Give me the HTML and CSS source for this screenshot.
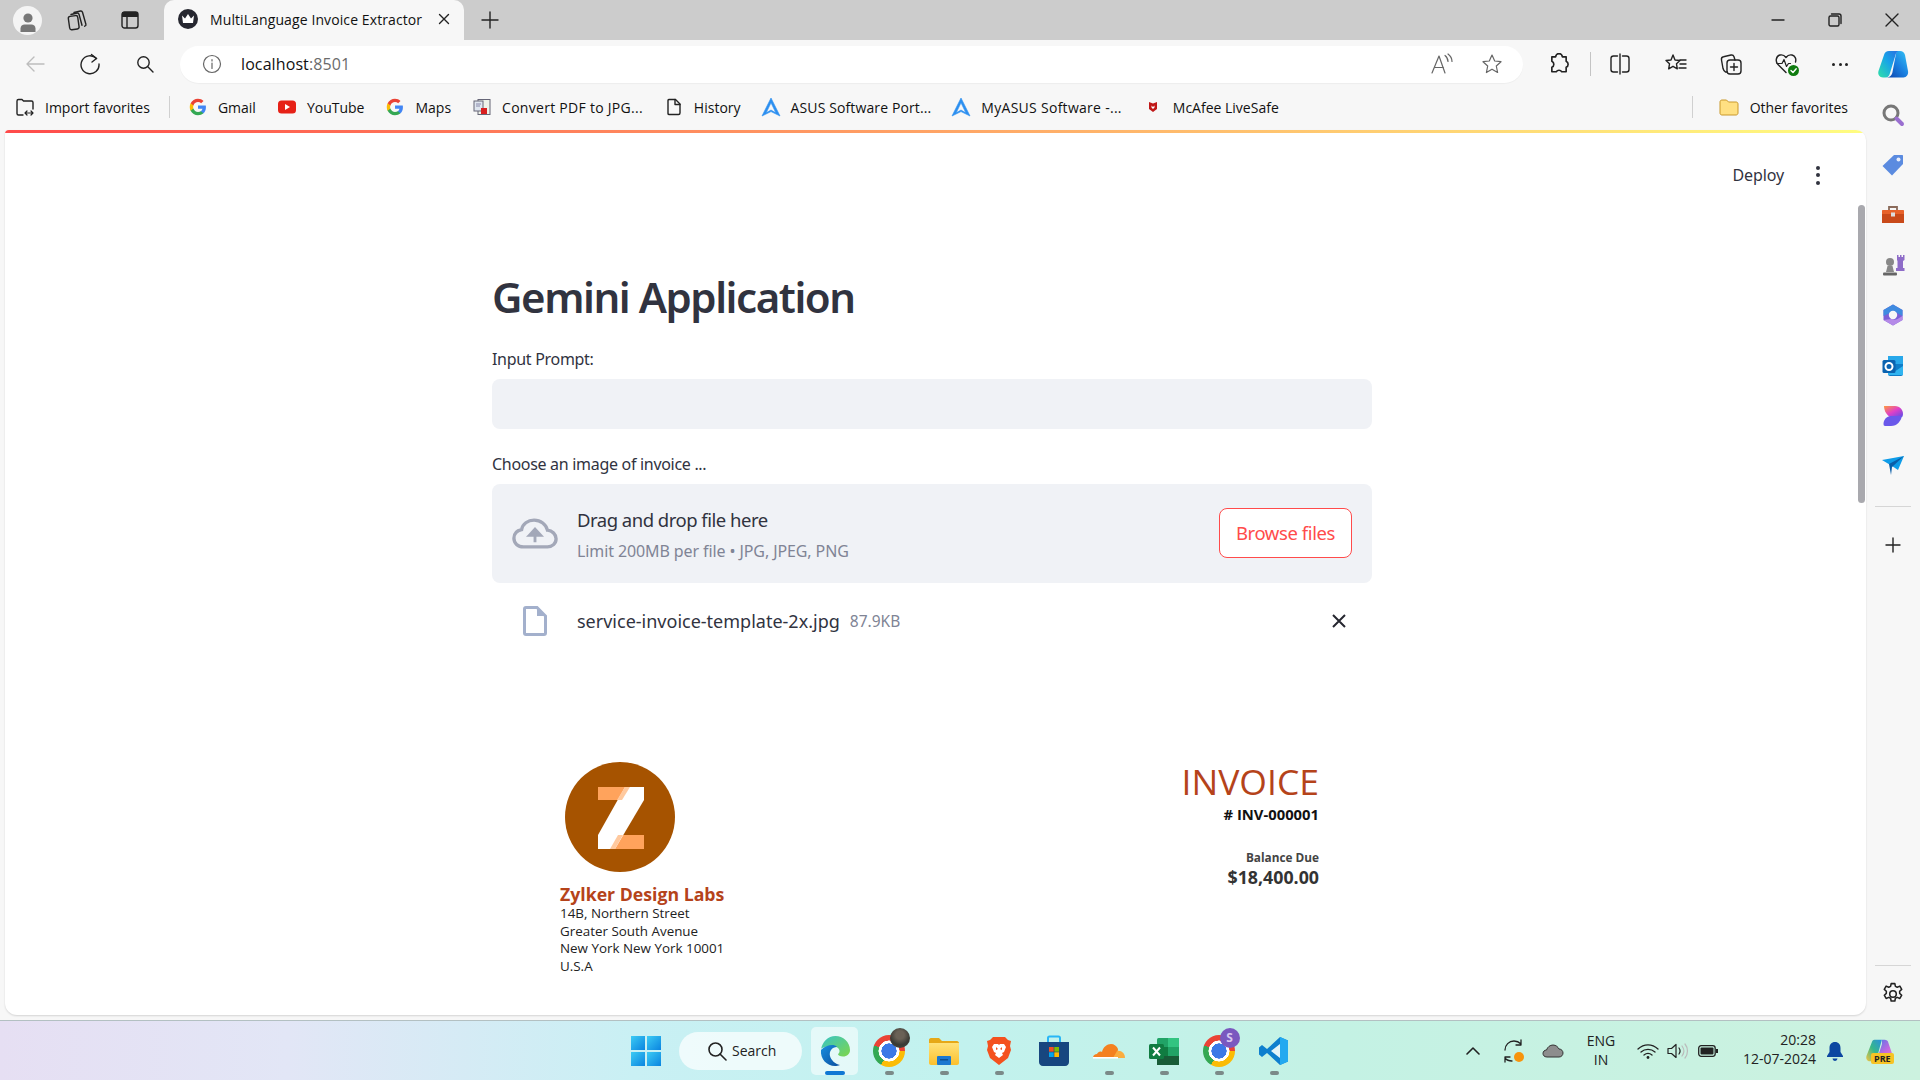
FILE: index.html
```html
<!DOCTYPE html>
<html lang="en">
<head>
<meta charset="utf-8">
<title>MultiLanguage Invoice Extractor</title>
<link rel="stylesheet" href="styles.css">
</head>
<body>
<svg class="defs" width="0" height="0" aria-hidden="true">
  <defs>
    <linearGradient id="cpA" x1="0" y1="1" x2="1" y2="0"><stop offset="0" stop-color="#2fe0a8"/><stop offset=".55" stop-color="#18a4e8"/><stop offset="1" stop-color="#2a6fe0"/></linearGradient>
    <linearGradient id="cpB" x1="0" y1="1" x2="1" y2="0"><stop offset="0" stop-color="#0a3fa8"/><stop offset=".5" stop-color="#1a7fe0"/><stop offset="1" stop-color="#35c6f6"/></linearGradient>
    <linearGradient id="cpC" x1="0" y1="1" x2="1" y2="0"><stop offset="0" stop-color="#f5c542"/><stop offset=".5" stop-color="#36b88a"/><stop offset="1" stop-color="#2b8fe0"/></linearGradient>
    <linearGradient id="cpD" x1="0" y1="0" x2="1" y2="1"><stop offset="0" stop-color="#3c7be8"/><stop offset=".6" stop-color="#c668e0"/><stop offset="1" stop-color="#f08aa8"/></linearGradient>
    <linearGradient id="edgeA" x1="0" y1="0" x2="1" y2="1"><stop offset="0" stop-color="#36c4c8"/><stop offset="1" stop-color="#7fd64a"/></linearGradient>
    <linearGradient id="edgeB" x1="0" y1="0" x2="1" y2="1"><stop offset="0" stop-color="#1a8fe0"/><stop offset="1" stop-color="#0b4f9e"/></linearGradient>
    <linearGradient id="dropG" x1="0" y1="0" x2="1" y2="1"><stop offset="0" stop-color="#ff9a3c"/><stop offset=".5" stop-color="#e040c8"/><stop offset="1" stop-color="#5a4de8"/></linearGradient>
    <linearGradient id="folderG" x1="0" y1="0" x2="0" y2="1"><stop offset="0" stop-color="#ffe27a"/><stop offset="1" stop-color="#fbc02d"/></linearGradient>
    <symbol id="gicon" viewBox="0 0 48 48">
      <path fill="#4285F4" d="M45.12 24.5c0-1.56-.14-3.06-.4-4.5H24v8.51h11.84c-.51 2.75-2.06 5.08-4.39 6.64v5.52h7.11c4.16-3.83 6.56-9.47 6.56-15.67z"/>
      <path fill="#34A853" d="M24 46c5.94 0 10.92-1.97 14.56-5.33l-7.11-5.52c-1.97 1.32-4.49 2.1-7.45 2.1-5.73 0-10.58-3.87-12.31-9.07H4.34v5.7C7.96 41.07 15.4 46 24 46z"/>
      <path fill="#FBBC05" d="M11.69 28.18C11.25 26.86 11 25.45 11 24s.25-2.86.69-4.18v-5.7H4.34C2.85 17.09 2 20.45 2 24c0 3.55.85 6.91 2.34 9.88l7.35-5.7z"/>
      <path fill="#EA4335" d="M24 10.75c3.23 0 6.13 1.11 8.41 3.29l6.31-6.31C34.91 4.18 29.93 2 24 2 15.4 2 7.96 6.93 4.34 14.12l7.35 5.7c1.73-5.2 6.58-9.07 12.31-9.07z"/>
    </symbol>
    <symbol id="asus" viewBox="0 0 20 20">
      <path d="M10 1 L19 19 L10 14.600 L1 19 Z M10 5.800 L5.200 15.800 L10 13 L14.800 15.800 Z" fill="#2b8ff0" fill-rule="evenodd" stroke="#2b8ff0" stroke-width=".6" stroke-linejoin="round"/>
    </symbol>
  </defs>
</svg>

<header class="titlebar">
  <div class="slot s55"><span class="avatar"><svg width="20" height="22" viewBox="0 0 20 22"><circle cx="10" cy="7" r="4.600" fill="#777"/><path d="M2.500 21v-3.500c0-2.600 2-4 4-4h7c2 0 4 1.400 4 4V21z" fill="#777"/></svg></span></div>
  <div class="slot s44"><svg width="22" height="22" viewBox="0 0 22 22" class="ln"><path d="M8 3.500 14.500 2c1-.2 1.700.3 2 1.200l3.400 12c.3 1-.2 1.700-1.200 2"/><path d="M5 5.500 11 4c1-.2 1.700.3 2 1.200l3 11"/><rect x="3" y="7" width="9.500" height="13.500" rx="2" transform="rotate(-8 7 14)"/></svg></div>
  <div class="slot s62"><svg width="18" height="18" viewBox="0 0 18 18"><rect x="1" y="1" width="16" height="16" rx="2.500" fill="none" stroke="#222" stroke-width="1.400"/><rect x="1" y="1" width="16" height="5" fill="#222"/><path d="M6 6v11" stroke="#222" stroke-width="1.400"/></svg></div>
  <div class="tab">
    <span class="favicon"><svg width="14" height="12" viewBox="0 0 14 12"><path d="M1 2.500 4 5.500 7 1l3 4.500 3-3-1 7.500H2z" fill="#fff"/></svg></span>
    <span class="tab-title">MultiLanguage Invoice Extractor</span>
    <svg class="tab-x ln" width="12" height="12" viewBox="0 0 12 12"><path d="M1.500 1.500l9 9M10.500 1.500l-9 9"/></svg>
  </div>
  <div class="slot s52"><svg width="18" height="18" viewBox="0 0 18 18" class="ln"><path d="M9 1v16M1 9h16"/></svg></div>
  <div class="win">
    <div class="slot s57"><svg width="14" height="14" viewBox="0 0 14 14" class="ln"><path d="M1 7h12"/></svg></div>
    <div class="slot s57"><svg width="14" height="14" viewBox="0 0 14 14" class="ln"><rect x="1" y="3" width="10" height="10" rx="1.500"/><path d="M3.500 1H11c1.200 0 2 .8 2 2v7.500"/></svg></div>
    <div class="slot s57"><svg width="14" height="14" viewBox="0 0 14 14" class="ln"><path d="M1 1l12 12M13 1 1 13"/></svg></div>
  </div>
</header>

<nav class="toolbar">
  <div class="slot s70"><svg width="20" height="18" viewBox="0 0 20 18" class="ln pale"><path d="M19 9H2M9 2 2 9l7 7"/></svg></div>
  <div class="slot s40"><svg width="22" height="22" viewBox="0 0 22 22" class="ln"><path d="M17.500 5.500A9 9 0 1 0 20 11"/><path d="M12.500 1.500l5 4-4.500 3.500"/></svg></div>
  <div class="slot s70"><svg width="18" height="18" viewBox="0 0 18 18" class="ln"><circle cx="7.500" cy="7.500" r="5.700"/><path d="M11.800 11.800 17 17"/></svg></div>
  <div class="address">
    <svg width="20" height="20" viewBox="0 0 20 20" class="ln grey"><circle cx="10" cy="10" r="8.500"/><path d="M10 9v5.500M10 5.500v1.500"/></svg>
    <span class="url">localhost<span class="port">:8501</span></span>
    <div class="addr-right">
      <svg width="24" height="22" viewBox="0 0 24 22" class="ln grey"><path d="M2 20 9 3l6 17M4.500 14.500h9"/><path d="M15 2.500c2 1.600 3 3.600 3 6M18 1c2.600 2 4 4.600 4 7.500"/></svg>
      <svg width="22" height="22" viewBox="0 0 22 22" class="ln grey"><path d="M11 2l2.700 6 6.300.7-4.700 4.300 1.300 6.500-5.600-3.300-5.600 3.300 1.300-6.500L2 8.700 8.300 8z"/></svg>
    </div>
  </div>
  <div class="slot s48 ext"><svg width="22" height="22" viewBox="0 0 20 20" class="ln"><path d="M7 3.500a3 3 0 0 1 6 0h3.500v4a3 3 0 0 1 0 5.500v4h-4a3 3 0 0 0-5 0h-4v-4a3 3 0 0 0 0-5.500v-4z" stroke-width="1.500"/></svg></div>
  <span class="vsep"></span>
  <div class="slot s58"><svg width="22" height="22" viewBox="0 0 22 22" class="ln"><path d="M8.500 3H4.500C3 3 2 4 2 5.500v11C2 18 3 19 4.500 19h4M13.500 3h4C19 3 20 4 20 5.500v11c0 1.500-1 2.500-2.500 2.500h-4M11 1v20"/></svg></div>
  <div class="slot s53"><svg width="22" height="22" viewBox="0 0 22 22" class="ln"><path d="M8 2l2 5 5 .5-3.500 3.300.8 5-4.300-2.500-4.300 2.500.8-5L1 7.500 6 7z"/><path d="M15 7h6M15 11h6M14 15h7"/></svg></div>
  <div class="slot s58"><svg width="24" height="24" viewBox="0 0 24 24" class="ln"><rect x="8" y="8" width="14" height="14" rx="3"/><path d="M15 11.500v7M11.500 15h7"/><path d="M8 20H6.500C5 19.500 4.500 18 4 16.500L2.500 8c-.3-1.700.5-3 2-3.300L12 3c1.500-.3 2.500.3 3 1.700l1 3.300"/></svg></div>
  <div class="slot s54 heart"><svg width="26" height="26" viewBox="0 0 26 26" class="ln"><path d="M12 21.500 4 13.500C1 10.500 2 5 6 4c2.500-.6 4.500.5 6 2.500C13.500 4.500 15.500 3.400 18 4c3 .8 4.500 4 3.500 7"/><path d="M3 12.500h5l2-4 2.500 7 2-3h2" stroke-width="1.200"/><circle cx="19.500" cy="19.500" r="5.500" fill="#107c10" stroke="none"/><path d="M17 19.500l2 2 3.200-3.700" stroke="#fff"/></svg></div>
  <div class="slot s52"><span class="dots3"><i></i><i></i><i></i></span></div>
  <div class="slot s54"><svg width="32" height="30" viewBox="0 0 32 30"><path d="M19.500 2H23c2.500 0 4.300 1.500 5 4l3 16c.7 3.500-1.500 6.500-4.500 6.500H9c3 0 5.500-1.500 6.300-4.500z" fill="url(#cpB)"/><path d="M12 2h9c-1 .5-2 2-2.500 4L13 24c-.5 2.500-2 4.500-4.500 4.500H6c-3.500 0-5.500-3-4.500-6.500L7 6c.7-2.500 2.500-4 5-4z" fill="url(#cpA)"/></svg></div>
</nav>

<div class="workspace">
  <div class="leftcol">
    <div class="bookmarks">
      <a class="bm first"><svg width="20" height="20" viewBox="0 0 20 20" class="ln"><path d="M8 18H3.500C2.500 18 2 17.400 2 16.500V4C2 3 2.500 2.500 3.500 2.500H7l1.500 1.500h8c1 0 1.500.5 1.500 1.500V12"/><path d="M10 16h8M12 14l-2 2 2 2M16 14l2 2-2 2" stroke-width="1.200"/></svg><span>Import favorites</span></a>
      <span class="bsep"></span>
      <a class="bm"><svg width="18" height="18"><use href="#gicon"/></svg><span>Gmail</span></a>
      <a class="bm"><svg width="18" height="18" viewBox="0 0 18 18"><rect x="0" y="2.500" width="18" height="13" rx="3.500" fill="#e62117"/><path d="M7 6l5 3-5 3z" fill="#fff"/></svg><span>YouTube</span></a>
      <a class="bm"><svg width="18" height="18"><use href="#gicon"/></svg><span>Maps</span></a>
      <a class="bm wide"><svg width="18" height="18" viewBox="0 0 18 18"><rect x="5" y="1.500" width="12" height="15" fill="#eef2e8" stroke="#667" /><rect x="1" y="3" width="9" height="10" fill="#dfe6ef" stroke="#667"/><rect x="8" y="10" width="6" height="6" fill="#d81e1e"/><path d="M3 6h5M3 8h4" stroke="#88a" /></svg><span>Convert PDF to JPG...</span></a>
      <a class="bm"><svg width="18" height="18" viewBox="0 0 18 18" class="ln"><path d="M4 1.500h6.500L15 6v9c0 .9-.6 1.500-1.500 1.500h-9.500C3 16.500 3 15.900 3 15V3c0-.9.1-1.500 1-1.500z"/><path d="M10 1.500V6.500h5"/></svg><span>History</span></a>
      <a class="bm asus"><svg width="20" height="20"><use href="#asus"/></svg><span>ASUS Software Port...</span></a>
      <a class="bm asus wide"><svg width="20" height="20"><use href="#asus"/></svg><span>MyASUS Software -...</span></a>
      <a class="bm"><svg width="18" height="18" viewBox="0 0 18 18"><path d="M5 4l4 1.500L13 4v7l-4 3-4-3z" fill="#c01818"/><path d="M7.500 7.500 9 9l1.500-1.500v2L9 11l-1.500-1.500z" fill="#fff"/></svg><span>McAfee LiveSafe</span></a>
      <span class="bsep end"></span>
      <a class="bm"><svg width="20" height="18" viewBox="0 0 20 18"><path d="M1 4c0-1 .6-2 2-2h4.500L9.500 4H17c1.200 0 2 .8 2 2v9c0 1-.8 2-2 2H3c-1.200 0-2-.8-2-2z" fill="#ffe082" stroke="#c9982a"/></svg><span>Other favorites</span></a>
    </div>
    <main class="page">
      <div class="decoration"></div>
      <div class="scroll-thumb"></div>
      <div class="app-header">
        <span class="deploy">Deploy</span>
        <span class="kebab"><i></i><i></i><i></i></span>
      </div>
      <section class="block">
        <h1 class="app-title">Gemini Application</h1>
        <label class="field-label first-label">Input Prompt:</label>
        <div class="text-input"></div>
        <label class="field-label second-label">Choose an image of invoice ...</label>
        <div class="dropzone">
          <svg class="cloud" width="46" height="31" viewBox="0 0 48 32"><path d="M12 30C6 30 2 26 2 21c0-4.500 3-8 8-9C11 6 16.500 2 23 2c7 0 12.500 4.500 14 10.500 5 .5 9 4.500 9 9 0 5-4 8.500-9 8.500z" fill="none" stroke="#a3a8b8" stroke-width="3.500"/><path d="M24 25V14M18 18l6-6.500 6 6.500z" fill="#a3a8b8" stroke="#a3a8b8" stroke-width="3"/></svg>
          <div class="drop-text">
            <div class="drop-title">Drag and drop file here</div>
            <div class="drop-limit">Limit 200MB per file • JPG, JPEG, PNG</div>
          </div>
          <span class="browse">Browse files</span>
        </div>
        <div class="file-row">
          <svg class="file-ic" width="24" height="30" viewBox="0 0 24 30"><path d="M3 1.500h11l8.500 8.500v17c0 1-.5 1.500-1.500 1.500H3c-1 0-1.500-.5-1.500-1.500V3c0-1 .5-1.500 1.500-1.500z" fill="#fff" stroke="#a3b0cc" stroke-width="3"/><path d="M14 1.500V10h8.500z" fill="#a3b0cc"/></svg>
          <span class="file-name">service-invoice-template-2x.jpg</span>
          <span class="file-size">87.9KB</span>
          <svg class="file-x" width="14" height="14" viewBox="0 0 14 14"><path d="M1 1l12 12M13 1 1 13" stroke="#262730" stroke-width="2" fill="none"/></svg>
        </div>
        <figure class="invoice">
          <div class="inv-left">
            <svg class="inv-logo" width="110" height="110" viewBox="0 0 110 110"><circle cx="55" cy="55" r="55" fill="#a65300"/><rect x="33" y="25" width="46" height="13" fill="#ffa35c"/><rect x="33" y="73" width="46" height="14" fill="#ffa35c"/><path d="M60 25h19v13L50 87H33V73z" fill="#fff"/><path d="M60 25h5l-8 13h-5z" fill="#ffc99e"/><path d="M50 87h-5l8-14h5z" fill="#ffc99e"/></svg>
            <div class="inv-co">Zylker Design Labs</div>
            <div class="inv-addr">14B, Northern Street</div>
            <div class="inv-addr">Greater South Avenue</div>
            <div class="inv-addr">New York New York 10001</div>
            <div class="inv-addr">U.S.A</div>
          </div>
          <div class="inv-right">
            <div class="inv-word">INVOICE</div>
            <div class="inv-no"># INV-000001</div>
            <div class="inv-bal">Balance Due</div>
            <div class="inv-amt">$18,400.00</div>
          </div>
        </figure>
      </section>
    </main>
  </div>
  <aside class="sidebar">
    <div class="side-slot"><svg width="24" height="24" viewBox="0 0 24 24"><circle cx="10" cy="10" r="7" fill="none" stroke="#777" stroke-width="3"/><path d="M15.500 15.500 21 21" stroke="#9a6fd0" stroke-width="4" stroke-linecap="round"/></svg></div>
    <div class="side-slot"><svg width="24" height="24" viewBox="0 0 24 24"><path d="M13 2h8c.6 0 1 .4 1 1v8L11 22.500 1.500 13z" fill="#5b8be0"/><circle cx="17.500" cy="6.500" r="2" fill="#e8eefc"/></svg></div>
    <div class="side-slot"><svg width="24" height="24" viewBox="0 0 24 24"><path d="M8 7V4h8v3" fill="none" stroke="#8a6a5a" stroke-width="1.800"/><path d="M1 8c0-.6.400-1 1-1h20c.6 0 1 .4 1 1v3H1z" fill="#e8622a"/><rect x="1" y="11" width="22" height="9" fill="#c94a1a"/><rect x="10" y="9.500" width="4" height="4" fill="#ddd"/></svg></div>
    <div class="side-slot"><svg width="24" height="24" viewBox="0 0 24 24"><circle cx="9" cy="9" r="4" fill="#888"/><path d="M6.500 13h5l1.500 6H5z" fill="#888"/><rect x="2" y="19.500" width="14" height="3" rx="1" fill="#666"/><path d="M16 2h1.500v2H19V2h1.500v2H22V2h1.500v5L22 8v7h1.500v3H15v-3h1.500V8L16 7z" fill="#8e6cc8"/></svg></div>
    <div class="side-slot"><svg width="24" height="24" viewBox="0 0 24 24"><path d="M12 1.500 21.500 7v10L12 22.500 2.500 17V7z" fill="#7c5fd6"/><path d="M12 1.500 21.500 7v6L16 10c-2-1.500-5-1.500-7 0L2.500 13V7z" fill="#3f8be0"/><path d="M12 22.500 21.500 17v-4l-5 3c-2 1-4 1-6 0l-8 1z" fill="#b58ae8"/><circle cx="12" cy="12" r="4.200" fill="#f7f7f7"/></svg></div>
    <div class="side-slot"><svg width="24" height="24" viewBox="0 0 24 24"><rect x="7" y="2" width="15" height="10" fill="#28a8ea"/><path d="M7 10h15v10c0 1-.6 2-2 2H9c-1.200 0-2-.9-2-2z" fill="#0f7dc8"/><path d="M7 12l7.500 5L22 12v9H7z" fill="#30b4f0"/><rect x="1.500" y="6" width="13" height="13" rx="1.500" fill="#0a63b0"/><circle cx="8" cy="12.500" r="3.500" fill="none" stroke="#fff" stroke-width="2"/></svg></div>
    <div class="side-slot"><svg width="24" height="24" viewBox="0 0 24 24"><path d="M3 2h11c5 0 8 4 8 8 0 1-.3 2-.8 3H9C6 11 3 7 3 2z" fill="url(#dropG)"/><path d="M10 12h11c-1 5-5 10-11 10H4c-1 0-1.500-1-1.500-2 0-4 3-8 7.500-8z" fill="#6a58ea"/></svg></div>
    <div class="side-slot"><svg width="24" height="22" viewBox="0 0 24 22"><path d="M1 5 23 1 17 15 11 11z" fill="#0e9ce8"/><path d="M8 9 23 1 11 12l-1 8z" fill="#0a5ea8"/></svg></div>
    <span class="side-div"></span>
    <div class="side-slot plus"><svg width="16" height="16" viewBox="0 0 16 16" class="ln"><path d="M8 1v14M1 8h14"/></svg></div>
    <span class="side-div bottom"></span>
    <div class="side-slot gear"><svg width="24" height="24" viewBox="0 0 22 22" class="ln"><circle cx="11" cy="11" r="3"/><path d="M9.300 1.500h3.400l.5 2.500 1.700.8 2.400-1 1.700 3-1.900 1.700v1.900l1.900 1.700-1.700 3-2.400-1-1.700.8-.5 2.500H9.300l-.5-2.500-1.700-.8-2.400 1-1.700-3 1.900-1.700V8.500L3 6.800l1.700-3 2.400 1 1.700-.8z"/></svg></div>
  </aside>
</div>

<footer class="taskbar">
  <div class="tk-win"><span class="winlogo"><i></i><i></i><i></i><i></i></span></div>
  <div class="tk-search"><svg width="20" height="20" viewBox="0 0 20 20" class="ln"><circle cx="8.500" cy="8.500" r="6.500" stroke-width="1.600"/><path d="M13 13l6 6" stroke-width="1.600"/></svg><span>Search</span></div>
  <div class="tk-edge">
    <svg width="32" height="32" viewBox="0 0 32 32"><path d="M2 15C3 7 9 1 16.500 1 24 1 31 7 31 15c0 4-3 6.500-7 6.500-3 0-5-1-5-2.500 2-1 2-4.500 0-6-4-3-11-2.500-17 .5z" fill="url(#edgeA)"/><path d="M2 15c5-5 13-6.500 16-3-5 0-8 4-7 9 1 4 5 8 10 9-2 .8-3.500 1-5 1C8 31 1 24 2 15z" fill="url(#edgeB)"/></svg>
    <i class="edge-bar"></i>
  </div>
  <div class="tk-apps">
    <div class="tk-app run"><span class="chrome"></span><span class="badge photo"></span></div>
    <div class="tk-app run"><svg width="30" height="28" viewBox="0 0 30 28"><path d="M0 3c0-1 .7-2 2-2h8l3 3h15c1 0 2 1 2 2v3H0z" fill="#e6a817"/><path d="M0 6h30v20c0 1-1 2-2 2H2c-1 0-2-1-2-2z" fill="url(#folderG)"/><rect x="8" y="19" width="14" height="9" rx="1" fill="#1a78d0"/><rect x="11" y="22" width="8" height="1.500" fill="#0c4f90"/></svg></div>
    <div class="tk-app run"><svg width="26" height="30" viewBox="0 0 26 30"><path d="M7 1h12l3 3 3 1-1 5 1 4-3 8-9 7-9-7-3-8 1-4-1-5 3-1z" fill="#f4511e"/><path d="M8 8h4l1 1 1-1h4l2 3-2 5-2 1 1 2-4 3-4-3 1-2-2-1-2-5z" fill="#fff"/><path d="M10 11l2 2-2 1zM16 11l-2 2 2 1z" fill="#f4511e"/></svg></div>
    <div class="tk-app"><svg width="30" height="32" viewBox="0 0 30 32"><path d="M9 7V3c0-1 .5-1.500 1.500-1.500h9C20.500 1.500 21 2 21 3v4" fill="none" stroke="#29b6f6" stroke-width="2"/><path d="M0 7h30v20c0 2-1.500 4-4 4H4c-2.500 0-4-2-4-4z" fill="#17467f"/><rect x="10" y="12" width="4.700" height="4.700" fill="#f25022"/><rect x="15.300" y="12" width="4.700" height="4.700" fill="#7fba00"/><rect x="10" y="17.300" width="4.700" height="4.700" fill="#00a4ef"/><rect x="15.300" y="17.300" width="4.700" height="4.700" fill="#ffb900"/></svg></div>
    <div class="tk-app run"><svg width="32" height="18" viewBox="0 0 32 18"><path d="M0 16c0-3 2-4 4-4 1-2 3-3 5-2 1-5 5-8 9-8 3 0 6 2 7 5l-1 9z" fill="#f48120"/><path d="M24 9c4-1 8 2 8 7H20z" fill="#faad3f"/><rect x="0" y="15" width="25" height="1.600" fill="#fff"/></svg></div>
    <div class="tk-app run"><svg width="30" height="28" viewBox="0 0 30 28"><rect x="8" y="1" width="22" height="27" rx="1.500" fill="#21a366"/><rect x="19" y="1" width="11" height="9" fill="#33c481"/><rect x="8" y="10" width="11" height="9" fill="#107c41"/><rect x="19" y="19" width="11" height="9" fill="#185c37"/><rect x="8" y="19" width="11" height="9" fill="#185c37"/><rect x="0" y="7" width="15" height="15" rx="1.500" fill="#107c41"/><path d="M4 10.500l7 8M11 10.500l-7 8" stroke="#fff" stroke-width="2"/></svg></div>
    <div class="tk-app run"><span class="chrome"></span><span class="badge letter">S</span></div>
    <div class="tk-app run"><svg width="30" height="30" viewBox="0 0 30 30"><path d="M21 1l8 3.500v21L21 29 8 17l-5 4-3-2.500V11.500L3 9l5 4z" fill="#0e7fce"/><path d="M21 1l8 3.500v21L21 29z" fill="#23a9f0"/><path d="M21 8v14l-9-7z" fill="#f0fbfa" opacity=".95"/></svg></div>
  </div>
  <div class="tray">
    <div class="tr s40"><svg width="14" height="9" viewBox="0 0 14 9" class="ln"><path d="M1 8l6-6 6 6" stroke-width="1.600"/></svg></div>
    <div class="tr s40 relative"><svg width="22" height="24" viewBox="0 0 22 24" class="ln"><path d="M3 11C3 6 7 2 12 2c3 0 5 1 7 3M19 1v5h-5M3 19c2 2.500 4 3 7 3M3 23v-5h5" stroke-width="1.300"/></svg><i class="orange-dot"></i></div>
    <div class="tr s40"><svg width="22" height="14" viewBox="0 0 22 14"><path d="M5 13C2 13 1 11 1 9.500 1 7.500 2.500 6 4.500 6 5.500 3 8 1 11 1c3 0 5 2 6 4 2.500 0 4 2 4 4s-1.500 4-4 4z" fill="#8d8d8d" stroke="#333" stroke-width="1"/></svg></div>
    <div class="tr lang"><span>ENG</span><span>IN</span></div>
    <div class="tr s30 wifi"><svg width="22" height="16" viewBox="0 0 22 16" class="ln"><path d="M1 6c6-5.500 14-5.500 20 0M4 9c4-3.500 10-3.500 14 0M7 12c2.500-2 5.500-2 8 0" stroke-width="1.300"/><circle cx="11" cy="14.500" r="1.400" fill="#222" stroke="none"/></svg></div>
    <div class="tr s30"><svg width="22" height="16" viewBox="0 0 22 16" class="ln"><path d="M1 5.500h3.500L9 1.500v13L4.500 10.500H1z" stroke-width="1.200"/><path d="M12 5c1.300 1.800 1.300 4.200 0 6" stroke-width="1.200"/><path d="M15 3c2.300 3 2.300 7 0 10M18 1c3.300 4 3.300 10 0 14" stroke="#bbb" stroke-width="1.200"/></svg></div>
    <div class="tr s30"><svg width="20" height="12" viewBox="0 0 20 12"><rect x=".7" y=".7" width="16.500" height="10.600" rx="2.500" fill="none" stroke="#222" stroke-width="1.300"/><rect x="2.500" y="2.500" width="13" height="7" rx="1" fill="#222"/><rect x="18" y="4" width="2" height="4" fill="#222"/></svg></div>
    <div class="clock"><span>20:28</span><span>12-07-2024</span></div>
    <div class="tr s38"><svg width="18" height="20" viewBox="0 0 18 20"><path d="M9 1c-3.500 0-5.500 2.500-5.500 6v4L1 15v1h16v-1l-2.500-4V7C14.500 3.500 12.500 1 9 1zM6.500 17.500h5C11 19.300 10 20 9 20s-2-.7-2.500-2.500z" fill="#0d47a1"/></svg></div>
    <div class="tr s52 relative"><svg width="30" height="26" viewBox="0 0 32 28"><path d="M18 2h3c2 0 3.500 1 4 3l5 15c1 3-1 5-4 5H9c2 0 3.500-1 4-3l5-15c.3-1.500 0-3.500 0-5z" fill="url(#cpD)"/><path d="M10 2h8l-5.500 20c-.5 1.500-2 3-4 3H5c-3 0-4.500-3-3.500-6L7 5c.6-1.800 1.500-3 3-3z" fill="url(#cpC)"/></svg><b class="pre">PRE</b></div>
  </div>
</footer>
</body>
</html>
```

FILE: styles.css
```css
* { box-sizing: border-box; }
html, body { margin: 0; height: 1080px; overflow: hidden; }
body {
  display: flex;
  flex-direction: column;
  width: 1920px;
  font-family: "Open Sans", "Noto Sans", sans-serif;
  color: #1a1a1a;
  background: #f7f7f7;
}
.defs { position: absolute; }
.ln { fill: none; stroke: #222; stroke-width: 1.4; stroke-linecap: round; stroke-linejoin: round; }
.ln.grey { stroke: #666; stroke-width: 1.2; }
.ln.pale { stroke: #bdbdbd; }

.slot { display: flex; align-items: center; justify-content: center; flex: none; height: 100%; }
.s30 { width: 30px; } .s38 { width: 38px; } .s40 { width: 40px; } .s44 { width: 44px; }
.s48 { width: 48px; } .s52 { width: 52px; } .s53 { width: 53px; } .s54 { width: 54px; }
.s55 { width: 55px; } .s57 { width: 57px; } .s58 { width: 58px; } .s62 { width: 62px; }
.s70 { width: 70px; }

/* Title bar */
.titlebar { display: flex; flex: none; height: 40px; background: #cccccc; }
.avatar { display: flex; align-items: flex-end; justify-content: center; width: 29px; height: 29px; border-radius: 50%; background: #f4f4f4; overflow: hidden; padding-bottom: 2px; }
.tab { display: flex; align-items: center; width: 300px; margin-left: 3px; padding: 0 0 2px 14px; background: #f7f7f7; border-radius: 10px 10px 0 0; font-size: 14px; }
.favicon { display: flex; align-items: center; justify-content: center; width: 20px; height: 20px; border-radius: 50%; background: #262730; flex: none; }
.tab-title { margin-left: 12px; width: 213px; white-space: nowrap; color: #111; letter-spacing: .1px; }
.tab-x { margin-left: 15px; }
.win { display: flex; margin-left: auto; }

/* Toolbar */
.toolbar { display: flex; flex: none; align-items: center; height: 48px; background: #f7f7f7; }
.address { display: flex; align-items: center; flex: none; width: 1343px; height: 37px; border-radius: 19px; background: #fff; padding: 0 20px 0 22px; box-shadow: 0 1px 1px rgba(0,0,0,.04); }
.url { margin-left: 19px; font-size: 16px; letter-spacing: .1px; color: #111; }
.port { color: #6b6b6b; }
.addr-right { display: flex; align-items: center; gap: 27px; margin-left: auto; }
.toolbar > .slot { height: 37px; }
.ext { margin-left: 12px; }
.vsep { width: 1px; height: 24px; margin-left: 7px; background: #c4c4c4; flex: none; }
.dots3 { display: flex; gap: 3.5px; }
.dots3 i { width: 3px; height: 3px; border-radius: 50%; background: #222; }

/* Workspace */
.workspace { display: flex; flex: 1; min-height: 0; }
.leftcol { display: flex; flex-direction: column; width: 1866px; flex: none; }
.bookmarks { display: flex; align-items: center; flex: none; gap: 22px; height: 42px; padding: 0 0 4px 15px; font-size: 14px; color: #111; white-space: nowrap; }
.bm { display: flex; align-items: center; gap: 11px; }
.bm.first { gap: 10px; }
.bm.wide span { letter-spacing: .28px; }
.bm.asus { gap: 10px; margin-left: -2px; }
.bm.asus:not(.wide) span { letter-spacing: .12px; }
.bsep { width: 1px; height: 22px; background: #d0d0d0; margin: 0 -3px; flex: none; }
.bsep.end { margin-left: auto; margin-right: 4px; }
.bookmarks > .bm:last-child { margin-right: 18px; }

.page { position: relative; flex: none; height: 885px; margin-left: 5px; background: #fff; border-radius: 4px 10px 12px 12px; box-shadow: 0 1px 2px rgba(0,0,0,.14); overflow: hidden; font-family: "Noto Sans", sans-serif; color: #31333f; }
.decoration { height: 3px; background: linear-gradient(90deg, #ff4b4b, #fffd80); }
.scroll-thumb { position: absolute; top: 75px; right: 1px; width: 7px; height: 298px; border-radius: 4px; background: #a9a9ae; }
.app-header { display: flex; align-items: center; justify-content: flex-end; height: 84px; padding: 0 46px 0 0; }
.deploy { font-size: 16px; letter-spacing: -.1px; }
.kebab { display: flex; flex-direction: column; gap: 3.500px; margin-left: 32px; }
.kebab i { width: 4px; height: 4px; border-radius: 50%; background: #31333f; }

.block { width: 880px; margin-left: 487px; }
.app-title { margin: 50px 0 0; height: 60px; line-height: 60px; font-size: 42px; font-weight: 600; letter-spacing: -1.45px; color: #31333f; white-space: nowrap; }
.field-label { display: block; height: 24px; line-height: 24px; font-size: 16px; letter-spacing: -.3px; }
.first-label { margin-top: 20px; }
.second-label { margin-top: 23px; }
.text-input { height: 50px; margin-top: 8px; border-radius: 8px; background: #f0f2f6; }
.dropzone { display: flex; align-items: center; height: 99px; margin-top: 8px; padding: 0 20px; border-radius: 8px; background: #f0f2f6; }
.drop-text { margin-left: 19px; padding-top: 2px; }
.drop-title { font-size: 18.500px; line-height: 26px; letter-spacing: -.5px; color: #31333f; }
.drop-limit { font-size: 16px; line-height: 22px; margin-top: 7px; letter-spacing: -.1px; color: #808495; }
.browse { display: flex; align-items: center; justify-content: center; width: 133px; height: 50px; margin: -2px 0 0 auto; border: 1px solid #ff4b4b; border-radius: 8px; background: #fff; color: #ff4b4b; font-size: 18.500px; letter-spacing: -.4px; }
.file-row { display: flex; align-items: center; height: 38px; margin-top: 19px; padding-left: 31px; }
.file-name { margin-left: 30px; font-size: 18px; color: #31333f; }
.file-size { margin-left: 10px; font-size: 15.500px; color: #808495; }
.file-x { margin-left: auto; margin-right: 26px; }

.invoice { display: flex; justify-content: space-between; margin: 122px 0 0; padding: 0 53px 0 68px; font-family: "Open Sans", sans-serif; }
.inv-logo { display: block; margin-left: 5px; }
.inv-co { margin: 12px 0 1px; font-size: 17.700px; line-height: 20px; font-weight: 700; color: #b5431a; }
.inv-addr { font-size: 13.400px; line-height: 17.700px; color: #222; }
.inv-right { text-align: right; }
.inv-word { margin-top: -1px; font-size: 35.500px; line-height: 40px; color: #b5431a; }
.inv-no { margin-top: 2px; font-size: 14.800px; line-height: 22px; font-weight: 700; color: #111; }
.inv-bal { margin-top: 23px; font-size: 11.800px; line-height: 18px; font-weight: 700; color: #444; }
.inv-amt { font-size: 17.800px; line-height: 22px; font-weight: 700; color: #333; }

/* Sidebar */
.sidebar { display: flex; flex-direction: column; align-items: center; width: 54px; flex: none; padding: 2px 0 6px; }
.side-slot { display: flex; align-items: center; justify-content: center; width: 54px; height: 50.100px; flex: none; }
.side-div { width: 36px; height: 1px; margin-top: 15px; background: #d6d6d6; flex: none; }
.side-div.bottom { margin-top: auto; margin-bottom: 8px; }
.plus { height: 40px; margin-top: 18px; }
.gear { height: 40px; }

/* Taskbar */
.taskbar { display: flex; align-items: center; flex: none; height: 60px; padding-left: 623px; border-top: 1px solid #b3c0c2; background: linear-gradient(90deg, #e6dff3 0%, #e2e6f6 15%, #c9f0f4 33%, #c2f2ee 50%, #c4f2e4 70%, #ccf2df 100%); }
.tk-win { display: flex; align-items: center; justify-content: center; width: 46px; }
.winlogo { display: grid; grid-template-columns: 14px 14px; gap: 2px; }
.winlogo i { height: 14px; background: linear-gradient(135deg, #3ccbf4, #0a84e0); }
.tk-search { display: flex; align-items: center; gap: 5px; width: 123px; height: 38px; margin-left: 10px; padding-left: 28px; border-radius: 19px; background: rgba(255,255,255,.7); font-size: 14px; color: #222; }
.tk-edge { position: relative; display: flex; align-items: center; justify-content: center; width: 47px; height: 48px; margin-left: 9px; border-radius: 5px; background: rgba(255,255,255,.55); }
.edge-bar { position: absolute; left: 14px; bottom: 0; width: 20px; height: 4px; border-radius: 2px; background: #0f78d4; }
.tk-apps { display: flex; margin-left: 3.500px; }
.tk-app { position: relative; display: flex; align-items: center; justify-content: center; width: 55px; height: 48px; }
.tk-app.run::after { content: ""; position: absolute; left: 23px; bottom: 0; width: 9px; height: 4px; border-radius: 2px; background: #7b8a88; }
.chrome { width: 32px; height: 32px; border-radius: 50%; background: radial-gradient(circle, #3b78e7 0 33%, #fff 34% 46%, transparent 47%), conic-gradient(from 0deg, #ea4335 0 90deg, #fbbc05 90deg 210deg, #34a853 210deg 290deg, #ea4335 290deg 360deg); }
.badge { position: absolute; top: 1px; right: 7px; display: flex; align-items: center; justify-content: center; width: 20px; height: 20px; border-radius: 50%; font-size: 12px; font-weight: 700; color: #d9c8f0; }
.badge.photo { background: radial-gradient(circle at 50% 35%, #6a6156 0 25%, #3a3a34 60%, #4c4a40 100%); }
.badge.letter { background: #7a58bf; }

.tray { display: flex; align-items: center; margin-left: auto; padding-right: 14px; height: 100%; }
.tr { display: flex; align-items: center; justify-content: center; height: 40px; flex: none; }
.relative { position: relative; }
.orange-dot { position: absolute; left: 21px; top: 21px; width: 10px; height: 10px; border-radius: 50%; background: #f7940d; }
.lang { flex-direction: column; width: 56px; margin-top: -2px; font-size: 14px; line-height: 19px; color: #222; }
.wifi { margin-left: 4px; }
.clock { display: flex; flex-direction: column; align-items: flex-end; width: 93px; margin-top: -3px; font-size: 14px; line-height: 19px; color: #222; }
.pre { position: absolute; left: 17px; top: 22px; padding: 0 3px; border-radius: 2px; background: #f7c325; font-size: 9px; line-height: 11px; color: #222; }
```
